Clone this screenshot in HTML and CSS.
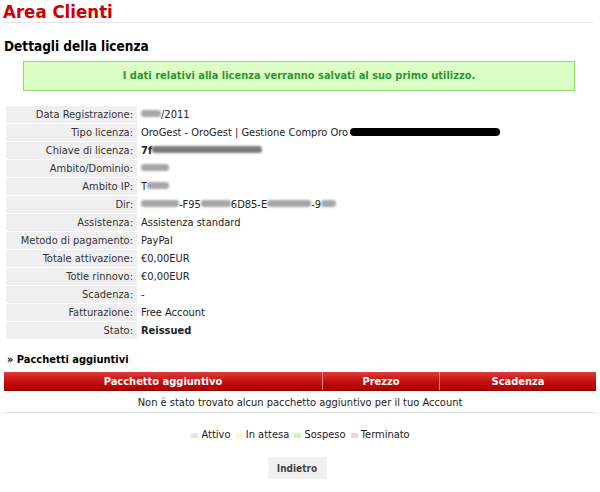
FILE: index.html
```html
<!DOCTYPE html>
<html lang="it">
<head>
<meta charset="utf-8">
<title>Area Clienti</title>
<link rel="stylesheet" href="styles.css">
</head>
<body>
<h1 class="title">Area Clienti</h1>
<h2 class="subtitle">Dettagli della licenza</h2>
<div class="notice">I dati relativi alla licenza verranno salvati al suo primo utilizzo.</div>

<table class="details">
  <tr><th>Data Registrazione:</th><td><span class="blur w20"></span>/2011</td></tr>
  <tr><th>Tipo licenza:</th><td>OroGest - OroGest | Gestione Compro Oro <span class="redact"></span></td></tr>
  <tr><th>Chiave di licenza:</th><td><b>7f</b><span class="blur dark w110"></span></td></tr>
  <tr><th>Ambito/Dominio:</th><td><span class="blur w30"></span></td></tr>
  <tr><th>Ambito IP:</th><td>T<span class="blur w25"></span></td></tr>
  <tr><th>Dir:</th><td><span class="blur w42"></span>-F95<span class="blur w35"></span>6D85-E<span class="blur w50"></span>-9<span class="blur w15"></span></td></tr>
  <tr><th>Assistenza:</th><td>Assistenza standard</td></tr>
  <tr><th>Metodo di pagamento:</th><td>PayPal</td></tr>
  <tr><th>Totale attivazione:</th><td>€0,00EUR</td></tr>
  <tr><th>Totle rinnovo:</th><td>€0,00EUR</td></tr>
  <tr><th>Scadenza:</th><td>-</td></tr>
  <tr><th>Fatturazione:</th><td>Free Account</td></tr>
  <tr><th>Stato:</th><td><b>Reissued</b></td></tr>
</table>

<h3 class="section">» Pacchetti aggiuntivi</h3>
<table class="packages">
  <thead>
    <tr><th class="c1">Pacchetto aggiuntivo</th><th class="c2">Prezzo</th><th class="c3">Scadenza</th></tr>
  </thead>
  <tbody>
    <tr><td colspan="3">Non è stato trovato alcun pacchetto aggiuntivo per il tuo Account</td></tr>
  </tbody>
</table>

<div class="legend">
  <span class="sq attivo"></span> Attivo
  <span class="sq attesa"></span> In attesa
  <span class="sq sospeso"></span> Sospeso
  <span class="sq terminato"></span> Terminato
</div>

<div class="actions"><button class="btn">Indietro</button></div>
</body>
</html>
```
FILE: styles.css
```css
html, body {
  margin: 0;
  padding: 0;
  background: #fff;
}
body {
  font-family: "DejaVu Sans Condensed", "DejaVu Sans", Verdana, sans-serif;
  font-size: 11px;
  color: #222;
  padding: 0 4px 0 3px;
}
.title {
  margin: 0 2px 0 0;
  padding: 2px 0 0 0;
  font-size: 18.5px;
  line-height: 20px;
  font-weight: bold;
  color: #cc0000;
  border-bottom: 1px solid #e6e6e6;
}
.subtitle {
  margin: 14px 0 0 1px;
  font-size: 13.5px;
  line-height: 18px;
  font-weight: bold;
  color: #000;
}
.notice {
  margin: 6px 21px 0 20px;
  height: 28px;
  line-height: 28px;
  background: #dcffc6;
  border: 1px solid #8fd86a;
  color: #2e962e;
  font-weight: bold;
  text-align: center;
  font-size: 11px;
}
.details {
  margin: 14px 0 0 2px;
  border-collapse: separate;
  border-spacing: 1px 1px;
}
.details th {
  width: 123px;
  background: #efefef;
  font-weight: normal;
  text-align: right;
  padding: 0 4px 0 4px;
  height: 17px;
  color: #333;
  white-space: nowrap;
}
.details td {
  padding: 0 0 0 3px;
  height: 17px;
  white-space: nowrap;
  color: #222;
}
.blur {
  display: inline-block;
  height: 7px;
  background: #a6a6a6;
  border-radius: 3px;
  filter: blur(1px);
  vertical-align: 1px;
}
.blur.dark { background: #7a7a7a; }
.w15 { width: 15px; }
.w20 { width: 20px; }
.w25 { width: 22px; }
.w30 { width: 28px; }
.w35 { width: 30px; }
.w42 { width: 38px; }
.w50 { width: 44px; }
.w110 { width: 110px; }
.redact {
  display: inline-block;
  width: 150px;
  height: 8px;
  background: #000;
  border-radius: 5px;
  vertical-align: 0;
  margin-left: -1px;
}
.section {
  margin: 13px 0 0 4px;
  font-size: 11px;
  line-height: 14px;
  font-weight: bold;
  color: #000;
}
.packages {
  margin: 5px 0 0 1px;
  width: 592px;
  border-collapse: collapse;
}
.packages th {
  height: 18px;
  padding: 0;
  color: #fff;
  font-weight: bold;
  font-size: 11px;
  background: linear-gradient(#de3a3a, #c40f0f 55%, #b00000);
  border-left: 1px solid #e88a8a;
  border-bottom: 1px solid #8a0000;
}
.packages th.c1 { width: 318px; border-left: none; }
.packages th.c2 { width: 116px; }
.packages td {
  text-align: center;
  height: 19px;
  padding: 2px 0 0 0;
  border-bottom: 1px solid #dcdcdc;
  color: #222;
}
.legend {
  text-align: center;
  margin-top: 15px;
  color: #222;
}
.sq {
  display: inline-block;
  width: 7px;
  height: 5px;
  margin: 0 0 0 2px;
  vertical-align: 0;
}
.attivo { background: #e6e6e6; }
.attesa { background: #f4fbc8; }
.sospeso { background: #d0f3c0; }
.terminato { background: #f6cfcf; }
.actions {
  text-align: center;
  margin-top: 16px;
}
.btn {
  font-family: "DejaVu Sans Condensed", "DejaVu Sans", Verdana, sans-serif;
  font-size: 10px;
  font-weight: bold;
  color: #444;
  background: #f0f0f0;
  border: 1px solid #f3f3f3;
  width: 59px;
  height: 22px;
  padding: 0;
  margin-left: -5px;
}
```
